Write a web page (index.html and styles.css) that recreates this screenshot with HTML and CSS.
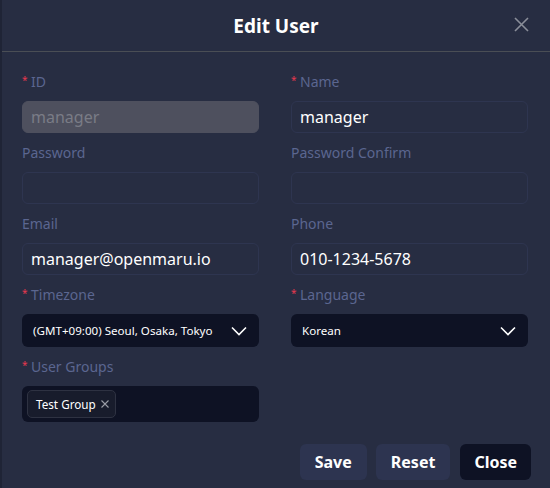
FILE: index.html
```html
<!DOCTYPE html>
<html lang="en">
<head>
  <meta charset="UTF-8" />
  <title>Edit User</title>
  <link rel="stylesheet" href="styles.css">
</head>
<body>
  <div class="modal">
    <header class="modal-header">
      <h1>Edit User</h1>
      <button class="close-x" aria-label="Close">
        <svg width="15" height="15" viewBox="0 0 15 15"><path d="M1 1L14 14M14 1L1 14" stroke="#8a8e99" stroke-width="1.6" fill="none"/></svg>
      </button>
    </header>

    <div class="modal-body">
      <div class="form-grid">
        <div class="field">
          <label class="required">ID</label>
          <div class="input disabled">manager</div>
        </div>
        <div class="field">
          <label class="required">Name</label>
          <div class="input">manager</div>
        </div>
        <div class="field">
          <label>Password</label>
          <div class="input"></div>
        </div>
        <div class="field">
          <label>Password Confirm</label>
          <div class="input"></div>
        </div>
        <div class="field">
          <label>Email</label>
          <div class="input">manager@openmaru.io</div>
        </div>
        <div class="field">
          <label>Phone</label>
          <div class="input">010-1234-5678</div>
        </div>
        <div class="field">
          <label class="required">Timezone</label>
          <div class="select">
            <span>(GMT+09:00) Seoul, Osaka, Tokyo</span>
            <svg width="16" height="10" viewBox="0 0 16 10"><path d="M1 1.5L8 8.5L15 1.5" stroke="#fff" stroke-width="1.6" fill="none"/></svg>
          </div>
        </div>
        <div class="field">
          <label class="required">Language</label>
          <div class="select">
            <span>Korean</span>
            <svg width="16" height="10" viewBox="0 0 16 10"><path d="M1 1.5L8 8.5L15 1.5" stroke="#fff" stroke-width="1.6" fill="none"/></svg>
          </div>
        </div>
        <div class="field">
          <label class="required">User Groups</label>
          <div class="tags">
            <span class="tag">Test Group
              <svg width="8" height="8" viewBox="0 0 8 8"><path d="M0.5 0.5L7.5 7.5M7.5 0.5L0.5 7.5" stroke="#9a9da6" stroke-width="1.1" fill="none"/></svg>
            </span>
          </div>
        </div>
      </div>
    </div>

    <footer class="modal-footer">
      <button class="btn">Save</button>
      <button class="btn">Reset</button>
      <button class="btn dark">Close</button>
    </footer>
  </div>
</body>
</html>
```

FILE: styles.css
```css
body {
  margin: 0;
  font-family: 'Noto Sans', sans-serif;
  background-color: #282d43;
}

.modal {
  width: 550px;
  height: 488px;
  background-color: #272d42;
  border-left: 2px solid #1f2436;
  box-sizing: border-box;
  display: flex;
  flex-direction: column;
}

.modal-header {
  height: 51px;
  border-bottom: 1px solid #4a4e55;
  display: flex;
  align-items: center;
  justify-content: center;
  position: relative;
}

.modal-header h1 {
  margin: 0;
  color: white;
  font-size: 19px;
  font-weight: bold;
}

.close-x {
  position: absolute;
  right: 21px;
  top: 17px;
  background: none;
  border: none;
  padding: 0;
  width: 15px;
  height: 15px;
  cursor: pointer;
}

.modal-body {
  padding: 20px 20px 0 20px;
}

.form-grid {
  display: grid;
  grid-template-columns: 237px 237px;
  column-gap: 32px;
  row-gap: 10px;
}

.field label {
  display: block;
  height: 20px;
  line-height: 20px;
  margin-bottom: 9px;
  font-size: 14px;
  color: #5b6690;
  position: relative;
}

.field label.required {
  padding-left: 9px;
}

.field label.required::before {
  content: '*';
  position: absolute;
  left: 0;
  top: -2px;
  color: #e8384f;
  font-size: 10px;
}

.input {
  height: 32px;
  box-sizing: border-box;
  border: 1px solid #2e3550;
  border-radius: 6px;
  padding: 0 8px;
  display: flex;
  align-items: center;
  font-size: 16px;
  color: white;
}

.input.disabled {
  background-color: #4e505e;
  border-color: #4e505e;
  color: #7a7c86;
}

.select {
  height: 33px;
  box-sizing: border-box;
  background-color: #0e1224;
  border-radius: 6px;
  padding: 0 12px 0 11px;
  display: flex;
  align-items: center;
  justify-content: space-between;
  font-size: 11.6px;
  color: white;
}

.tags {
  height: 36px;
  box-sizing: border-box;
  background-color: #0e1224;
  border-radius: 6px;
  padding: 0 5px;
  display: flex;
  align-items: center;
}

.tag {
  display: flex;
  align-items: center;
  gap: 5px;
  height: 28px;
  box-sizing: border-box;
  padding: 0 6px 0 8px;
  background-color: #181c2c;
  border: 1px solid #2e3242;
  border-radius: 5px;
  font-size: 11.7px;
  color: white;
}

.modal-footer {
  margin-top: auto;
  display: flex;
  justify-content: flex-end;
  gap: 9px;
  padding: 0 19px 8px 0;
}

.btn {
  height: 36px;
  padding: 0 15px;
  border: none;
  border-radius: 6px;
  background-color: #2d3450;
  color: white;
  font-family: 'Noto Sans', sans-serif;
  font-size: 16px;
  font-weight: bold;
  cursor: pointer;
}

.btn.dark {
  margin-left: 1px;
  padding: 0 14px;
  background-color: #0e1224;
}
```
